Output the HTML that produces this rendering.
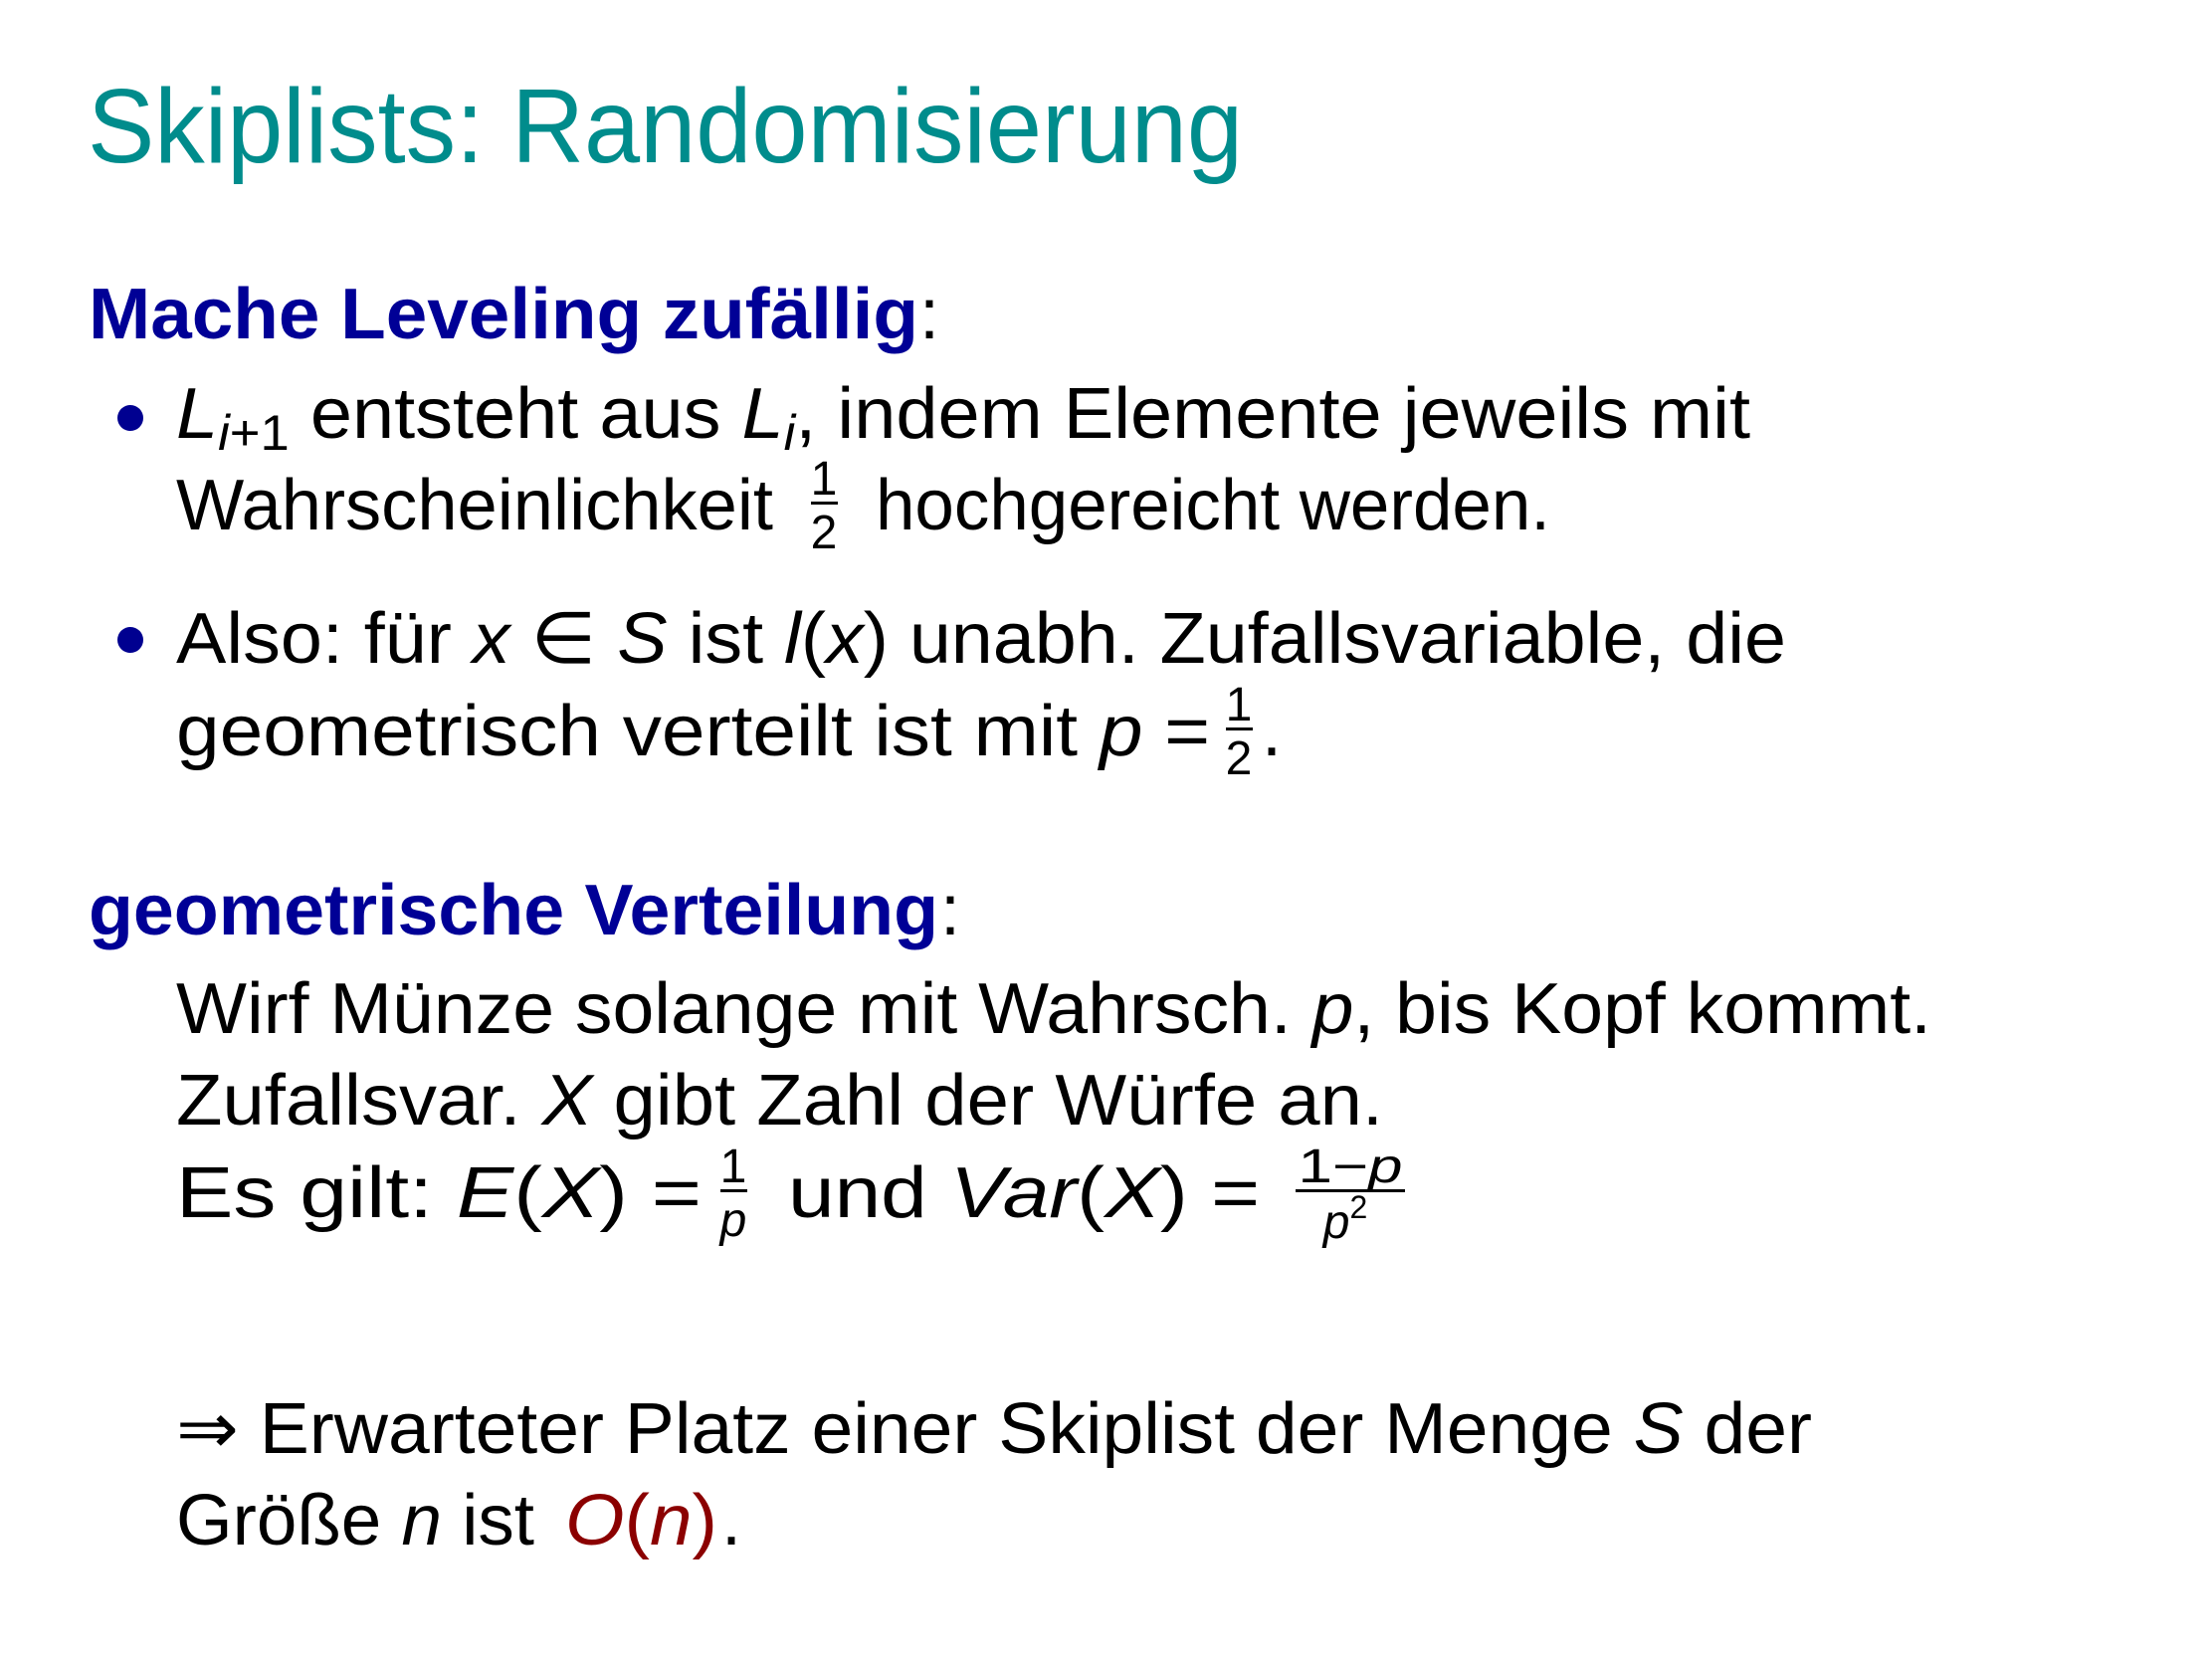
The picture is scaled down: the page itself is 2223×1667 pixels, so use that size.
<!DOCTYPE html>
<html><head><meta charset="utf-8"><style>html,body{margin:0;padding:0;background:#fff;}svg{display:block}</style></head>
<body>
<svg width="2223" height="1667" viewBox="0 0 2223 1667" xmlns="http://www.w3.org/2000/svg" font-family="Liberation Sans, DejaVu Sans, sans-serif">
<rect width="2223" height="1667" fill="#fff"/>
<g transform="translate(0,7)">
<text x="88" y="156" font-size="106" fill="#008c8c" textLength="1161" lengthAdjust="spacingAndGlyphs">Skiplists: Randomisierung</text>

<text x="89" y="333" font-size="72" font-weight="bold" fill="#000096" textLength="834" lengthAdjust="spacingAndGlyphs">Mache Leveling zufällig</text>
<text x="924" y="333" font-size="72" fill="#000">:</text>

<circle cx="131" cy="413" r="13" fill="#000090"/>
<text x="177" y="433" font-size="72" fill="#000" textLength="1582" lengthAdjust="spacingAndGlyphs"><tspan font-style="italic">L</tspan><tspan font-size="50" dy="12"><tspan font-style="italic">i</tspan>+1</tspan><tspan dy="-12"> entsteht aus </tspan><tspan font-style="italic">L</tspan><tspan font-size="50" dy="12" font-style="italic">i</tspan><tspan dy="-12">, indem Elemente jeweils mit</tspan></text>
<text x="177" y="525" font-size="72" fill="#000" textLength="600" lengthAdjust="spacingAndGlyphs">Wahrscheinlichkeit</text>
<text x="828" y="490" font-size="48" fill="#000" text-anchor="middle">1</text>
<rect x="815" y="497" width="27" height="3" fill="#000"/>
<text x="828" y="544" font-size="48" fill="#000" text-anchor="middle">2</text>
<text x="880" y="525" font-size="72" fill="#000" textLength="678" lengthAdjust="spacingAndGlyphs">hochgereicht werden.</text>

<circle cx="131" cy="636" r="13" fill="#000090"/>
<text x="177" y="659" font-size="72" fill="#000" textLength="1618" lengthAdjust="spacingAndGlyphs">Also: für <tspan font-style="italic">x</tspan> ∈ <tspan font-style="italic">S</tspan> ist <tspan font-style="italic">l</tspan>(<tspan font-style="italic">x</tspan>) unabh. Zufallsvariable, die</text>
<text x="177" y="752" font-size="72" fill="#000" textLength="1039" lengthAdjust="spacingAndGlyphs">geometrisch verteilt ist mit <tspan font-style="italic">p</tspan> =</text>
<text x="1245" y="717" font-size="48" fill="#000" text-anchor="middle">1</text>
<rect x="1232" y="724" width="27" height="3" fill="#000"/>
<text x="1245" y="771" font-size="48" fill="#000" text-anchor="middle">2</text>
<text x="1268" y="752" font-size="72" fill="#000">.</text>

<text x="89" y="932" font-size="72" font-weight="bold" fill="#000096" textLength="854" lengthAdjust="spacingAndGlyphs">geometrische Verteilung</text>
<text x="945" y="932" font-size="72" fill="#000">:</text>

<text x="177" y="1031" font-size="72" fill="#000" textLength="1764" lengthAdjust="spacingAndGlyphs">Wirf Münze solange mit Wahrsch. <tspan font-style="italic">p</tspan>, bis Kopf kommt.</text>
<text x="177" y="1123" font-size="72" fill="#000" textLength="1213" lengthAdjust="spacingAndGlyphs">Zufallsvar. <tspan font-style="italic">X</tspan> gibt Zahl der Würfe an.</text>
<text x="177" y="1216" font-size="72" fill="#000" textLength="528" lengthAdjust="spacingAndGlyphs">Es gilt: <tspan font-style="italic">E</tspan>(<tspan font-style="italic">X</tspan>) =</text>
<text x="737" y="1181" font-size="48" fill="#000" text-anchor="middle">1</text>
<rect x="724" y="1188" width="27" height="3" fill="#000"/>
<text x="737" y="1235" font-size="48" fill="#000" text-anchor="middle" font-style="italic">p</text>
<text x="792" y="1216" font-size="72" fill="#000" textLength="474" lengthAdjust="spacingAndGlyphs">und <tspan font-style="italic">Var</tspan>(<tspan font-style="italic">X</tspan>) =</text>
<text x="1357" y="1181" font-size="48" fill="#000" text-anchor="middle" textLength="105" lengthAdjust="spacingAndGlyphs">1−<tspan font-style="italic">p</tspan></text>
<rect x="1302" y="1188" width="110" height="3" fill="#000"/>
<text x="1352" y="1237" font-size="48" fill="#000" text-anchor="middle"><tspan font-style="italic">p</tspan><tspan font-size="32" dy="-20">2</tspan></text>

<text x="177" y="1453" font-size="72" fill="#000" textLength="1644" lengthAdjust="spacingAndGlyphs">⇒ Erwarteter Platz einer Skiplist der Menge <tspan font-style="italic">S</tspan> der</text>
<text x="177" y="1545" font-size="72" fill="#000" textLength="360" lengthAdjust="spacingAndGlyphs">Größe <tspan font-style="italic">n</tspan> ist</text>
<text x="568" y="1545" font-size="72" fill="#8b0000" textLength="153" lengthAdjust="spacingAndGlyphs"><tspan font-style="italic">O</tspan>(<tspan font-style="italic">n</tspan>)</text>
<text x="725" y="1545" font-size="72" fill="#000">.</text>
</g>
</svg>
</body></html>
